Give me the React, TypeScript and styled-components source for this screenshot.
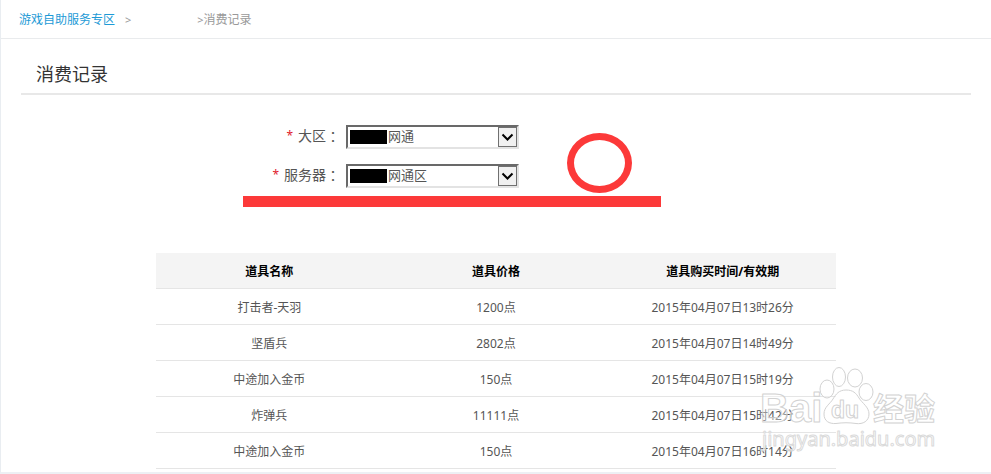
import React from "react";
import styled, { createGlobalStyle } from "styled-components";

const GlobalStyle = createGlobalStyle`
  * { box-sizing: border-box; }
  body {
    margin: 0;
    background: #fff;
    color: #555;
    font: 12px/18px "Noto Sans", "Noto Sans CJK SC", sans-serif;
  }
`;

const Page = styled.div`
  position: relative;
  border-left: 1px solid #e9edf1;
  border-bottom: 2px solid #edf0f4;
  padding-bottom: 3px;
  overflow: hidden;
`;

const Breadcrumb = styled.nav`
  display: flex;
  align-items: center;
  height: 39px;
  padding: 2px 18px 0;
  border-bottom: 1px solid #e9ebed;
  color: #999;
`;

const Crumb = styled.a`
  color: #1d9ad6;
  text-decoration: none;
`;

const Separator = styled.span`
  padding: 0 66px 0 10px;
  font-size: 11px;
`;

const Arrow = styled.span`
  font-size: 11px;
`;

const Title = styled.h1`
  margin: 15px 20px 0;
  padding: 6px 15px 5px;
  border-bottom: 2px solid #e8e8e8;
  color: #333;
  font-size: 18px;
  font-weight: 400;
  line-height: 28px;
`;

const Content = styled.main`
  width: 680px;
  max-width: 100%;
  margin: 0 auto;
`;

const Filters = styled.form`
  position: relative;
  display: grid;
  gap: 15px;
  padding: 30px 0 65px;
`;

const Field = styled.div`
  display: grid;
  grid-template-columns: 184px 173px;
  grid-template-rows: 24px;
  column-gap: 6px;
  align-items: center;
`;

const Label = styled.label`
  display: flex;
  align-items: center;
  justify-content: flex-end;
  height: 24px;
  padding-bottom: 2px;
  font-size: 14px;
`;

const Colon = styled.span`
  font-family: "Noto Sans CJK TC", sans-serif;
`;

const Required = styled.span`
  margin-right: 5px;
  color: #e0202c;
  font-size: 12px;
`;

const SelectBox = styled.div`
  position: relative;
  height: 24px;
  border: 2px solid;
  border-color: #696969 #e3e3e3 #e3e3e3 #696969;
`;

const Select = styled.select`
  display: block;
  width: 100%;
  height: 20px;
  padding: 0 22px 2px 40px;
  border: 0;
  border-radius: 0;
  outline: 0;
  appearance: none;
  background: #fff;
  color: #555;
  font: 13px/18px "Noto Sans", "Noto Sans CJK SC", sans-serif;
`;

const Mask = styled.span`
  position: absolute;
  top: 3px;
  left: 2px;
  width: 37px;
  height: 14px;
  background: #000;
  pointer-events: none;
`;

const DropIcon = styled.svg`
  position: absolute;
  top: 0;
  right: 0;
  width: 19px;
  height: 20px;
  border: 1px solid #707070;
  background: #f0f0f0;
  pointer-events: none;
`;

const Underline = styled.div`
  position: absolute;
  left: 87px;
  bottom: 46px;
  width: 418px;
  height: 11px;
  background: #fc3939;
`;

const Ring = styled.div`
  position: absolute;
  top: 38px;
  left: 411px;
  width: 65px;
  height: 60px;
  border: 7px solid #fc3939;
  border-radius: 50%;
`;

const Table = styled.table`
  width: 100%;
  border-collapse: separate;
  border-spacing: 0;
  table-layout: fixed;
  text-align: center;
`;

const Cell = styled.td`
  height: 36px;
  padding: 2px 0 0;
  border-bottom: 1px solid #e5e5e5;
`;

const HeadCell = styled(Cell).attrs({ as: "th" })`
  background: #f4f4f4;
  color: #000;
  font-weight: 700;
`;

const Watermark = styled.svg`
  position: absolute;
  right: 49px;
  bottom: 19px;
  width: 188px;
  height: 94px;
  pointer-events: none;
`;

const records = [
  ["打击者-天羽", "1200点", "2015年04月07日13时26分"],
  ["坚盾兵", "2802点", "2015年04月07日14时49分"],
  ["中途加入金币", "150点", "2015年04月07日15时19分"],
  ["炸弹兵", "11111点", "2015年04月07日15时42分"],
  ["中途加入金币", "150点", "2015年04月07日16时14分"],
];

function SelectField({ id, label, value }: { id: string; label: string; value: string }) {
  return (
    <Field>
      <Label htmlFor={id}>
        <Required>*</Required>
        {label}
        <Colon>：</Colon>
      </Label>
      <SelectBox>
        <Select id={id} defaultValue={value}>
          <option>{value}</option>
        </Select>
        <Mask />
        <DropIcon viewBox="0 0 17 18" aria-hidden="true">
          <path d="M3.5 6.5 8.5 11.5 13.5 6.5" fill="none" stroke="#000" strokeWidth="2" />
        </DropIcon>
      </SelectBox>
    </Field>
  );
}

function BaiduMark() {
  return (
    <Watermark viewBox="14 4 188 94" aria-hidden="true">
      <g
        fill="#fff"
        fillOpacity="0.4"
        stroke="#d2d2d2"
        strokeWidth="1"
        strokeLinejoin="round"
        fontFamily='"Liberation Sans", "Noto Sans CJK SC", sans-serif'
      >
        <text x="20" y="67" fontSize="40" fontWeight="700">Bai</text>
        <text x="133" y="65" fontSize="31" fontWeight="700">经验</text>
        <ellipse cx="99" cy="22" rx="6.5" ry="9.5" />
        <ellipse cx="115" cy="23" rx="7.5" ry="9" />
        <ellipse cx="87" cy="34" rx="7" ry="9" />
        <ellipse cx="126" cy="37" rx="7" ry="8.5" />
        <path d="M106 35C99 35 96 39 93 44C90 49 84 52 84 59C84 66 89 69 96 68.500C103 67.500 109 67.500 116 68.500C123 69.500 129 66 129 59C129 52 122 48 119 43C116 38 113 35 106 35Z" />
        <text x="91" y="63" fontSize="23" fontWeight="700">du</text>
        <text
          x="22"
          y="91"
          fontSize="20"
          stroke="#dadada"
          fillOpacity="0.6"
          fontFamily='"Noto Sans", sans-serif'
        >
          jingyan.baidu.com
        </text>
      </g>
    </Watermark>
  );
}

export default function App() {
  return (
    <Page>
      <GlobalStyle />
      <Breadcrumb>
        <Crumb href="#">游戏自助服务专区</Crumb>
        <Separator>&gt;</Separator>
        <Arrow>&gt;</Arrow>
        <span>消费记录</span>
      </Breadcrumb>
      <Title>消费记录</Title>
      <Content>
        <Filters>
          <SelectField id="region" label="大区" value="网通" />
          <SelectField id="server" label="服务器" value="网通区" />
          <Underline />
          <Ring />
        </Filters>
        <Table>
          <thead>
            <tr>
              <HeadCell>道具名称</HeadCell>
              <HeadCell>道具价格</HeadCell>
              <HeadCell>道具购买时间/有效期</HeadCell>
            </tr>
          </thead>
          <tbody>
            {records.map((record, row) => (
              <tr key={row}>
                {record.map((text, column) => (
                  <Cell key={column}>{text}</Cell>
                ))}
              </tr>
            ))}
          </tbody>
        </Table>
      </Content>
      <BaiduMark />
    </Page>
  );
}
